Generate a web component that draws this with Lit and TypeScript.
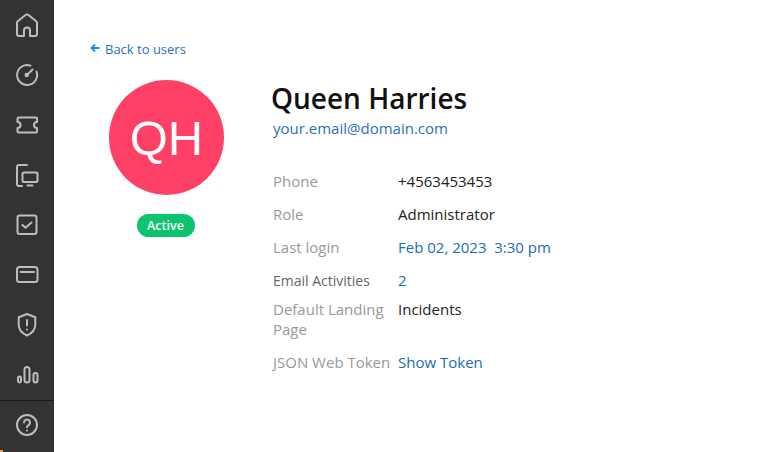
import { LitElement, html, css } from "lit";
import { customElement } from "lit/decorators.js";

@customElement("app-root")
export class AppRoot extends LitElement {
  static styles = css`
    :host { display: block; width: 767px; height: 452px; background: #fff; font-family: "Open Sans", sans-serif; overflow: hidden; }
    .page { display: flex; height: 452px; }
    .side { position: relative; width: 54px; flex: none; background: #333; display: flex; flex-direction: column; }
    .mark { position: absolute; left: 0; bottom: 0; width: 3px; height: 2px; background: #f0a030; }
    .nav { flex: 1; min-height: 0; display: flex; flex-direction: column; padding-top: 7px; align-items: center; }
    .nav svg, .help svg { display: block; width: 36px; height: 36px; fill: none; stroke: #bdbdbd; stroke-width: 2; stroke-linecap: round; stroke-linejoin: round; }
    .item { height: 50px; flex: none; display: flex; align-items: flex-start; justify-content: center; }
    .item:last-child { height: 43px; }
    .help { height: 52px; flex: none; border-top: 1px solid #1b1b1b; padding-top: 6px; display: flex; justify-content: center; box-sizing: border-box; }
    .dot { fill: #bdbdbd; stroke: none; }
    .main { flex: 1; padding: 41px 0 0 36px; }
    .back { display: flex; align-items: center; gap: 5px; font-size: 13px; line-height: 17px; color: #2a70b8; height: 17px; }
    .back svg { width: 10px; height: 10px; fill: none; stroke: #1e88d9; stroke-width: 1.800; margin-top: -4px; }
    .profile { display: flex; margin-top: 22px; }
    .left { width: 153px; display: flex; flex-direction: column; align-items: center; }
    .avatar { width: 115px; height: 115px; border-radius: 50%; background: #ff4066; color: #fff; font-family: "Liberation Sans", sans-serif; font-size: 49px; display: flex; align-items: center; justify-content: center; }
    .badge { margin-top: 19px; margin-left: -2px; width: 58px; height: 23px; border-radius: 12px; background: #0cc46d; color: #fff; font-size: 12.500px; font-weight: 600; display: flex; align-items: center; justify-content: center; }
    .right { margin-left: 28px; }
    h1 { margin: 0; font-size: 28px; font-weight: 600; line-height: 37px; color: #111; }
    .email { font-size: 15px; line-height: 20px; color: #2a70b8; margin-top: 1px; margin-left: 2px; }
    .rows { margin-top: 33px; margin-left: 2px; }
    .row { display: flex; margin-bottom: 13px; font-size: 15px; line-height: 20px; color: #222; }
    .row.tight { margin-bottom: 9px; }
    .label { width: 125px; flex: none; color: #999; }
    .label.dark { color: #666; font-size: 14px; line-height: 22px; }
    .row.tight { height: 20px; }
    .link { color: #1a6cb5; white-space: pre; }
  `;

  render() {
    return html`<div class="page">
      <aside class="side">
        <div class="nav">
          <div class="item"><svg viewBox="0 0 36 36"><path d="M15 29v-5.500a3 3 0 0 1 6 0V29h5a2 2 0 0 0 2-2V15.800a2 2 0 0 0-.8-1.600L19.500 8a2.500 2.500 0 0 0-3 0L8.800 14.200a2 2 0 0 0-.8 1.600V27a2 2 0 0 0 2 2z"/></svg></div>
          <div class="item"><svg viewBox="0 0 36 36"><path d="M21.500 8.600a10 10 0 1 0 6 6"/><circle class="dot" cx="17.700" cy="18" r="2.200"/><path d="M18 18l5.500-5.500"/></svg></div>
          <div class="item"><svg viewBox="0 0 36 36"><path d="M9.500 10.500h17.500a1 1 0 0 1 1 1V15a3 3 0 0 0 0 6v3.500a1 1 0 0 1-1 1H9.500a1 1 0 0 1-1-1V21a3 3 0 0 0 0-6v-3.500a1 1 0 0 1 1-1z"/></svg></div>
          <div class="item"><svg viewBox="0 0 36 36"><path d="M18 8h-8a2 2 0 0 0-2 2v17a2 2 0 0 0 2 2h3"/><rect x="13.500" y="15.500" width="15" height="9.500" rx="1.500"/><path d="M18.500 28.500h5"/></svg></div>
          <div class="item"><svg viewBox="0 0 36 36"><rect x="8.500" y="8.500" width="19" height="18.500" rx="2"/><path d="M13.500 18l3 2.800 6-5.300"/></svg></div>
          <div class="item"><svg viewBox="0 0 36 36"><rect x="8" y="10" width="20.500" height="15" rx="2.500"/><path d="M11.500 15h13.500"/></svg></div>
          <div class="item"><svg viewBox="0 0 36 36"><path d="M18 7l8.300 3.200v7.300c0 5.500-3.700 9-8.300 11-4.600-2-8.300-5.500-8.300-11v-7.300z"/><path d="M18 13v5.500M18 22.500h0"/></svg></div>
          <div class="item"><svg viewBox="0 0 36 36"><rect x="9" y="19.500" width="3" height="6" rx="1.400"/><rect x="15.500" y="10" width="5" height="15.500" rx="2.500"/><rect x="24.500" y="16" width="4" height="9.500" rx="2"/></svg></div>
        </div>
        <div class="help"><svg viewBox="0 0 36 36"><circle cx="18" cy="18" r="10"/><path d="M15 15.500a3 3 0 1 1 4.500 2.600c-1 .6-1.500 1.100-1.500 2.200M18 23.500h0"/></svg></div>
        <div class="mark"></div>
      </aside>
      <main class="main">
        <div class="back"><svg viewBox="0 0 10 10"><path d="M9.500 5H1.500M5 1.500L1.500 5 5 8.500"/></svg>Back to users</div>
        <div class="profile">
          <div class="left">
            <div class="avatar">QH</div>
            <div class="badge">Active</div>
          </div>
          <div class="right">
            <h1>Queen Harries</h1>
            <div class="email">your.email@domain.com</div>
            <div class="rows">
              <div class="row"><div class="label">Phone</div><div>+4563453453</div></div>
              <div class="row"><div class="label">Role</div><div>Administrator</div></div>
              <div class="row"><div class="label">Last login</div><div class="link">Feb 02, 2023  3:30 pm</div></div>
              <div class="row tight"><div class="label dark">Email Activities</div><div class="link">2</div></div>
              <div class="row"><div class="label">Default Landing Page</div><div>Incidents</div></div>
              <div class="row"><div class="label">JSON Web Token</div><div class="link">Show Token</div></div>
            </div>
          </div>
        </div>
      </main>
    </div>`;
  }
}
